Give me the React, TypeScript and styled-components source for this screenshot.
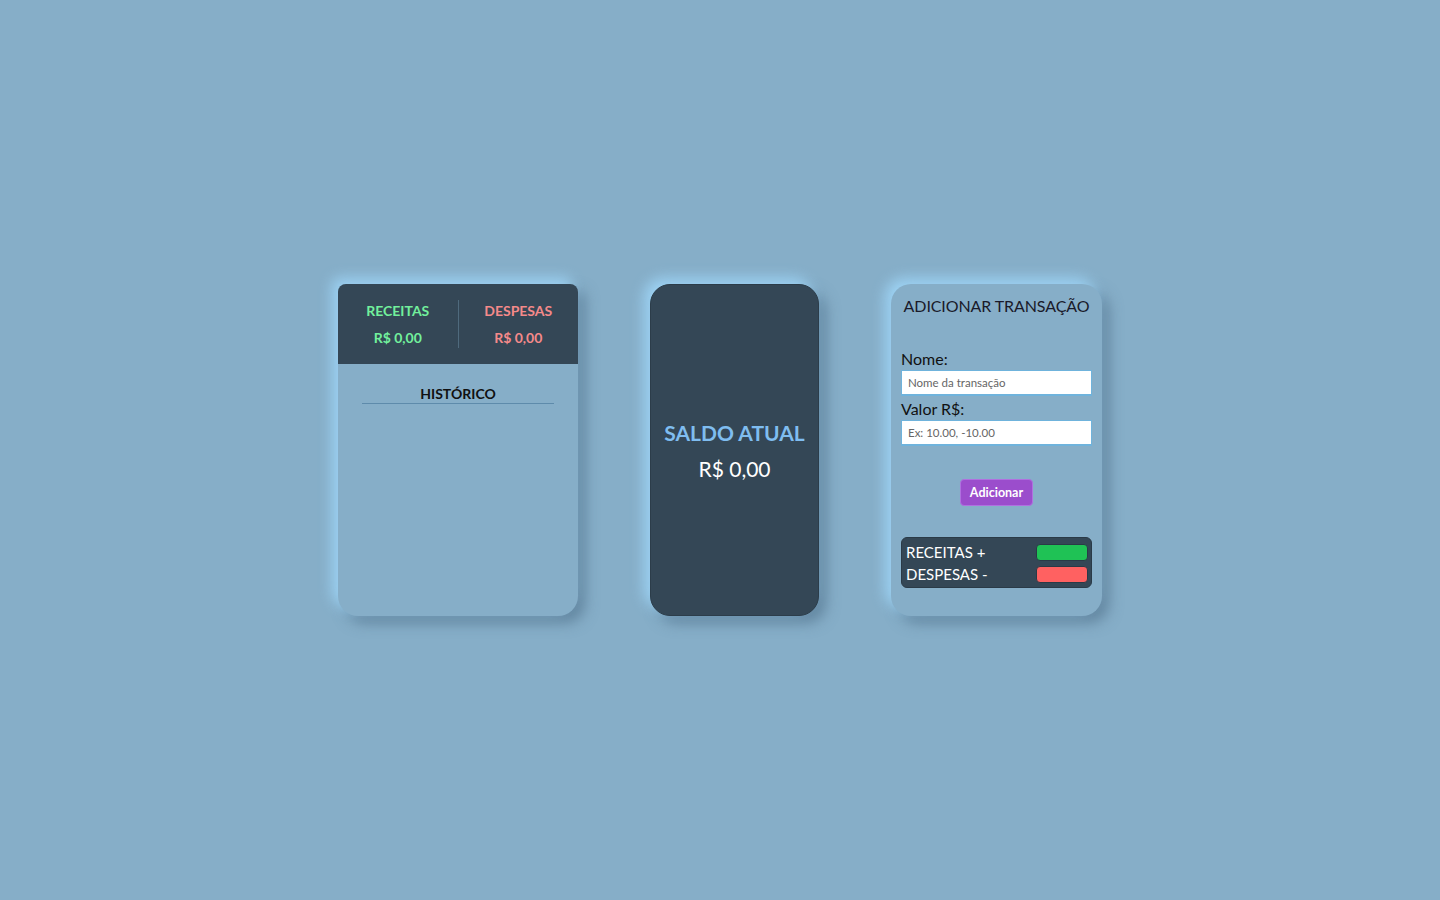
import React from "react";
import styled, { createGlobalStyle } from "styled-components";

const Global = createGlobalStyle`
  html, body { margin: 0; padding: 0; }
  body {
    background: #86aec8;
    font-family: Lato, "Open Sans", sans-serif;
  }
  * { box-sizing: border-box; }
`;

const Page = styled.main`
  min-height: 100vh;
  display: flex;
  align-items: center;
  justify-content: center;
  gap: 72px;
`;

const shadow = `-6px -6px 14px rgba(160, 215, 250, 0.9), 7px 7px 14px rgba(70, 100, 125, 0.55)`;

const HistoryCard = styled.section`
  width: 240px;
  height: 332px;
  border-radius: 8px 8px 20px 20px;
  background: #86aec8;
  box-shadow: ${shadow};
  display: flex;
  flex-direction: column;
  overflow: hidden;
`;

const Summary = styled.div`
  height: 80px;
  background: #344756;
  display: grid;
  grid-template-columns: 1fr 1px 1fr;
  align-items: center;
  padding: 16px 0;
`;

const SummaryCol = styled.div<{ $color: string }>`
  display: flex;
  flex-direction: column;
  align-items: center;
  gap: 10px;
  color: ${(p) => p.$color};
  font-weight: 700;
  font-size: 14px;
  line-height: 17px;
`;

const Divider = styled.div`
  width: 1px;
  height: 48px;
  background: #4f6a7d;
`;

const HistoryTitle = styled.h3`
  margin: 21px 24px 0;
  padding-bottom: 1px;
  text-align: center;
  font-size: 14px;
  font-weight: 700;
  color: #111;
  border-bottom: 1px solid #5e8bab;
  line-height: 17px;
`;

const BalanceCard = styled.section`
  width: 169px;
  height: 332px;
  border-radius: 20px;
  background: #344756;
  border: 1px solid #2c3d4a;
  box-shadow: ${shadow};
  display: flex;
  flex-direction: column;
  align-items: center;
  justify-content: center;
  gap: 10px;
`;

const BalanceTitle = styled.div`
  color: #7fbdf0;
  font-size: 21px;
  font-weight: 700;
  line-height: 26px;
  padding-top: 2px;
`;

const BalanceValue = styled.div`
  color: #fff;
  font-size: 21px;
  line-height: 26px;
`;

const FormCard = styled.section`
  width: 211px;
  height: 332px;
  border-radius: 20px;
  background: #86aec8;
  box-shadow: ${shadow};
  padding: 11px 10px 0;
  display: flex;
  flex-direction: column;
`;

const FormTitle = styled.h2`
  margin: 0 -6px;
  text-align: center;
  white-space: nowrap;
  font-size: 16px;
  letter-spacing: -0.1px;
  font-weight: 400;
  color: #1a1a2a;
  line-height: 22px;
`;

const Label = styled.label`
  font-size: 16px;
  color: #111;
  line-height: 20px;
  display: block;
`;

const Fields = styled.div`
  margin-top: 32px;
  display: flex;
  flex-direction: column;
`;

const Input = styled.input`
  width: 191px;
  height: 26px;
  border: 1px solid #6fb3dc;
  border-bottom-width: 2px;
  background: #fff;
  padding: 0 6px;
  font-family: inherit;
  font-size: 11.5px;
  margin-top: 1px;
  margin-bottom: 3px;
  &::placeholder { color: #666; }
`;

const Button = styled.button`
  align-self: center;
  margin-top: 30px;
  width: 73px;
  height: 27px;
  background: #9b4dcc;
  color: #fff;
  border: 1px solid #b070e0;
  border-radius: 4px;
  font-family: inherit;
  font-weight: 700;
  font-size: 12.5px;
  padding: 0;
`;

const Legend = styled.div`
  margin-top: 31px;
  background: #344756;
  border: 1px solid #2a3a47;
  border-radius: 6px;
  padding: 5px 3px 4px 4px;
  display: flex;
  flex-direction: column;
  gap: 4px;
`;

const LegendRow = styled.div`
  display: flex;
  justify-content: space-between;
  align-items: center;
  color: #fff;
  font-size: 15px;
  line-height: 18px;
`;

const Swatch = styled.span<{ $color: string }>`
  width: 52px;
  height: 17px;
  border-radius: 4px;
  background: ${(p) => p.$color};
  border: 1px solid #2a3a47;
`;

export default function App() {
  return (
    <>
      <Global />
      <Page>
        <HistoryCard>
          <Summary>
            <SummaryCol $color="#72f09c">
              <span>RECEITAS</span>
              <span>R$ 0,00</span>
            </SummaryCol>
            <Divider />
            <SummaryCol $color="#f58a8a">
              <span>DESPESAS</span>
              <span>R$ 0,00</span>
            </SummaryCol>
          </Summary>
          <HistoryTitle>HISTÓRICO</HistoryTitle>
        </HistoryCard>
        <BalanceCard>
          <BalanceTitle>SALDO ATUAL</BalanceTitle>
          <BalanceValue>R$ 0,00</BalanceValue>
        </BalanceCard>
        <FormCard>
          <FormTitle>ADICIONAR TRANSAÇÃO</FormTitle>
          <Fields>
            <Label htmlFor="nome">Nome:</Label>
            <Input id="nome" placeholder="Nome da transação" />
            <Label htmlFor="valor">Valor R$:</Label>
            <Input id="valor" placeholder="Ex: 10.00, -10.00" />
          </Fields>
          <Button>Adicionar</Button>
          <Legend>
            <LegendRow>
              RECEITAS +
              <Swatch $color="#1fc255" />
            </LegendRow>
            <LegendRow>
              DESPESAS -
              <Swatch $color="#ff6161" />
            </LegendRow>
          </Legend>
        </FormCard>
      </Page>
    </>
  );
}
